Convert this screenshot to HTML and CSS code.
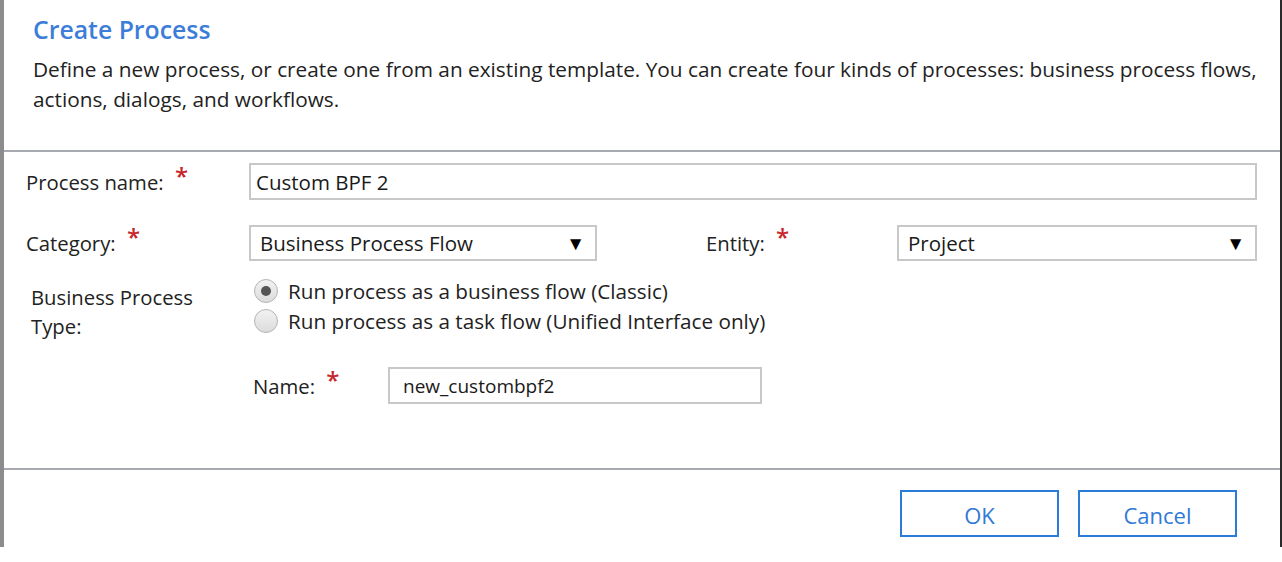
FILE: index.html
```html
<!DOCTYPE html>
<html>
<head>
<meta charset="utf-8">
<link rel="stylesheet" href="styles.css">
</head>
<body>
<div class="dialog">
  <div class="header">
    <h1 class="title">Create Process</h1>
    <p class="desc">Define a new process, or create one from an existing template. You can create four kinds of processes: business process flows, actions, dialogs, and workflows.</p>
  </div>
  <div class="rule"></div>
  <div class="form">
    <div class="row row-name">
      <div class="label label-main">Process name: <span class="req">*</span></div>
      <div class="field field-wide">Custom BPF 2</div>
    </div>
    <div class="row row-cat">
      <div class="label label-main">Category: <span class="req">*</span></div>
      <div class="field select select-cat"><span>Business Process Flow</span><span class="arrow">▼</span></div>
      <div class="label label-entity">Entity: <span class="req">*</span></div>
      <div class="field select select-ent"><span>Project</span><span class="arrow">▼</span></div>
    </div>
    <div class="row row-type">
      <div class="label label-type">Business Process Type:</div>
      <div class="radios">
        <div class="radio-item"><span class="radio checked"></span><span>Run process as a business flow (Classic)</span></div>
        <div class="radio-item"><span class="radio"></span><span>Run process as a task flow (Unified Interface only)</span></div>
      </div>
    </div>
    <div class="row row-uname">
      <div class="label label-uname">Name: <span class="req">*</span></div>
      <div class="field field-uname">new_custombpf2</div>
    </div>
  </div>
  <div class="rule"></div>
  <div class="footer">
    <button class="btn">OK</button>
    <button class="btn">Cancel</button>
  </div>
</div>
</body>
</html>
```

FILE: styles.css
```css
* { box-sizing: border-box; }
html, body { margin: 0; padding: 0; background: #ffffff; }
body {
  font-family: "Open Sans", "Noto Sans", "Liberation Sans", sans-serif;
  color: #1e1e1e;
}
.dialog {
  width: 1282px;
  height: 547px;
  border-left: 4px solid #8c8c8c;
  border-right: 2px solid #2a2a2a;
  display: flex;
  flex-direction: column;
  background: #fff;
}
.header {
  height: 150px;
  padding: 13px 0 0 29px;
}
.title {
  margin: 0;
  font-size: 24.8px;
  font-weight: 600;
  color: #3b7dd8;
  line-height: 32px;
}
.desc {
  margin: 9px 0 0 0;
  font-size: 20.8px;
  line-height: 30px;
  color: #222;
  width: 1235px;
}
.rule {
  height: 2px;
  background: #a6a9af;
  flex: none;
}
.form {
  height: 316px;
  padding: 11px 23px 0 22px;
  display: flex;
  flex-direction: column;
}
.label {
  font-size: 20.3px;
  color: #222;
  white-space: nowrap;
}
.req {
  color: #c8262b;
  font-size: 24px;
  font-weight: 600;
  position: relative;
  top: -5px;
  margin-left: 6px;
  line-height: 0;
}
.row { display: flex; align-items: center; }
.label-main { width: 223px; }
.field {
  border: 2px solid #c8c8c8;
  height: 37px;
  font-size: 20.5px;
  color: #1a1a1a;
  display: flex;
  align-items: center;
  padding: 0 5px;
}
.field-wide { flex: 1; }
.row-cat { margin-top: 25px; }
.select { height: 36px; justify-content: space-between; padding: 0 10px 0 9px; }
.select-cat { width: 348px; }
.label-entity { margin-left: 109px; width: 191px; }
.select-ent { width: 360px; }
.arrow { font-size: 19px; color: #000; }
.row-type { align-items: flex-start; margin-top: 18px; }
.label-type {
  width: 223px;
  padding-left: 5px;
  white-space: normal;
  line-height: 29px;
  margin-top: 4px;
  padding-right: 40px;
}
.radios { display: flex; flex-direction: column; gap: 5px; padding-left: 5px; margin-top: -1px; }
.radio-item {
  display: flex;
  align-items: center;
  gap: 10px;
  font-size: 20.7px;
  color: #222;
  height: 25px;
}
.radio {
  width: 24px;
  height: 24px;
  border-radius: 50%;
  border: 1px solid #b4b4b4;
  background: linear-gradient(#f2f2f2, #dcdcdc);
  display: flex;
  align-items: center;
  justify-content: center;
  flex: none;
}
.radio.checked::after {
  content: "";
  width: 10px;
  height: 10px;
  border-radius: 50%;
  background: #555;
}
.row-uname { margin-top: 26px; padding-left: 227px; }
.label-uname { width: 135px; }
.field-uname { width: 374px; height: 37px; padding-left: 13px; font-size: 19px; }
.footer {
  flex: 1;
  display: flex;
  justify-content: flex-end;
  align-items: flex-start;
  gap: 19px;
  padding: 20px 43px 0 0;
}
.btn {
  width: 159px;
  height: 47px;
  border: 2px solid #2b7cd9;
  background: #fff;
  color: #2f79d6;
  font-family: inherit;
  font-size: 22px;
  padding: 3px 0 0 0;
  line-height: 40px;
}
```
